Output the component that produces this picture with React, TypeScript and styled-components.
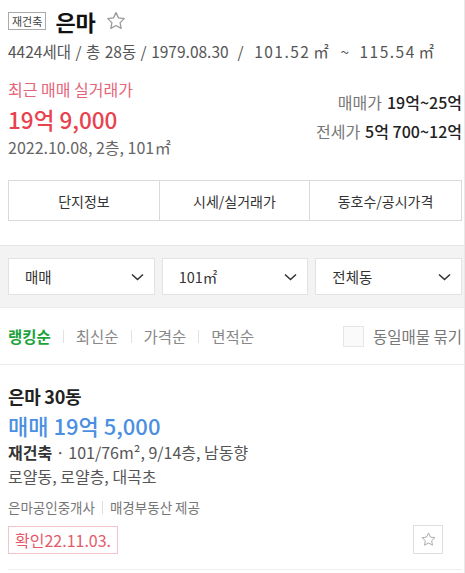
import React from "react";
import styled, {createGlobalStyle} from "styled-components";

const GlobalStyle = createGlobalStyle`
    body {
        margin: 0;
        background: #fff;
        font-family: "Noto Sans CJK KR", "Noto Sans", sans-serif;
        color: #222;
    }
`;

const Page = styled.div`
    width: 464px;
    height: 573px;
    border-right: 1px solid #e8e8e8;
    overflow: hidden;
`;

const Section = styled.div`
    padding: 0 2px 0 8px;
`;

const TitleRow = styled.div`
    display: flex;
    align-items: center;
    gap: 9px;
    padding-top: 6px;
    height: 30px;
`;

const Badge = styled.span`
    border: 1px solid #aaa;
    font-size: 11px;
    line-height: 16px;
    padding: 0 3px;
    color: #444;
`;

const Title = styled.h1`
    margin: 0;
    font-size: 22px;
    font-weight: 700;
    line-height: 28px;
    color: #111;
`;

const Meta = styled.div`
    font-size: 15.5px;
    color: #555;
    margin-top: 4px;
    line-height: 22px;
    word-spacing: 1px;
    white-space: nowrap;
`;

const Wide = styled.span`
    letter-spacing: 1.5px;
    word-spacing: 4px;
`;

const Unit = styled.span<{$w?: number}>`
    display: inline-block;
    width: ${(p) => p.$w ?? 17}px;
    text-align: center;
    letter-spacing: 0;
`;

const PriceBlock = styled.div`
    display: flex;
    justify-content: space-between;
    margin-top: 17px;
`;

const Left = styled.div`
    display: flex;
    flex-direction: column;
`;

const Label = styled.div`
    font-size: 16px;
    color: #e5657a;
    line-height: 20px;
`;

const BigPrice = styled.div`
    font-size: 22.5px;
    font-weight: 500;
    color: #e8424f;
    line-height: 30px;
    margin-top: 5px;
`;

const Sub = styled.div`
    font-size: 16px;
    color: #666;
    line-height: 22px;
    margin-top: 2px;
`;

const Right = styled.div`
    display: flex;
    flex-direction: column;
    align-items: flex-end;
    gap: 7px;
    padding-top: 12px;
`;

const RangeLine = styled.div`
    font-size: 16px;
    line-height: 22px;
    color: #777;
    b {
        color: #222;
        font-weight: 500;
        margin-left: 5px;
    }
`;

const Tabs = styled.div`
    display: grid;
    grid-template-columns: 150px 150px 1fr;
    border: 1px solid #d9d9d9;
    margin-top: 22px;
    height: 39px;
`;

const Tab = styled.div<{$first?: boolean}>`
    display: flex;
    align-items: center;
    justify-content: center;
    font-size: 14px;
    color: #333;
    border-left: ${(p) => (p.$first ? "none" : "1px solid #d9d9d9")};
`;

const FilterBand = styled.div`
    margin-top: 24px;
    border-top: 1px solid #e4e4e4;
    background: #f3f3f3;
    padding: 12px 2px 12px 8px;
    display: grid;
    grid-template-columns: 1fr 1fr 1fr;
    gap: 7px;
    border-bottom: 1px solid #ececec;
`;

const Select = styled.div`
    background: #fff;
    border: 1px solid #e2e2e2;
    height: 35px;
    display: flex;
    align-items: center;
    justify-content: space-between;
    padding: 0 10px 0 16px;
    font-size: 14.5px;
    color: #333;
`;

const SortRow = styled.div`
    display: flex;
    align-items: center;
    justify-content: space-between;
    padding: 0 2px 0 8px;
    height: 56px;
    border-bottom: 1px solid #ececec;
`;

const Sorts = styled.div`
    display: flex;
    align-items: center;
`;

const SortItem = styled.span<{$active?: boolean}>`
    font-size: 15.5px;
    color: ${(p) => (p.$active ? "#1ea23a" : "#888")};
    font-weight: ${(p) => (p.$active ? 700 : 400)};
`;

const Divider = styled.span`
    width: 1px;
    height: 13px;
    background: #e2e2e2;
    margin: 0 12px;
`;

const Group = styled.label`
    display: flex;
    align-items: center;
    gap: 9px;
    font-size: 15.5px;
    color: #777;
`;

const Box = styled.span`
    width: 19px;
    height: 19px;
    border: 1px solid #e6e6e6;
    background: #fafafa;
`;

const Card = styled.div`
    padding: 19px 2px 0 8px;
`;

const CardTitle = styled.div`
    font-size: 18px;
    font-weight: 700;
    color: #222;
    line-height: 24px;
    letter-spacing: -0.3px;
`;

const CardPrice = styled.div`
    font-size: 22px;
    color: #4a8fe2;
    font-weight: 500;
    line-height: 30px;
    margin-top: 2px;
`;

const Spec = styled.div`
    font-size: 16px;
    color: #555;
    line-height: 24px;
    b {
        color: #333;
        font-weight: 700;
    }
`;

const Agent = styled.div`
    font-size: 13.5px;
    color: #777;
    margin-top: 10px;
    line-height: 18px;
    display: flex;
    align-items: center;
    i {
        width: 1px;
        height: 13px;
        background: #ddd;
        margin: 0 7px;
    }
`;

const Bottom = styled.div`
    display: flex;
    justify-content: space-between;
    align-items: center;
    margin-top: 9px;
    padding-right: 19px;
    padding-bottom: 15px;
    border-bottom: 1px solid #eee;
`;

const Confirm = styled.span`
    border: 1px solid #f3c4ca;
    color: #e55a6b;
    font-size: 16px;
    line-height: 26px;
    padding: 0 6px;
`;

const StarButton = styled.span`
    width: 28px;
    height: 27px;
    border: 1px solid #ddd;
    display: flex;
    align-items: center;
    justify-content: center;
`;

const Star = ({size, color}: {size: number; color: string}) => (
    <svg width={size} height={size} viewBox="0 0 24 24" fill="none" stroke={color} strokeWidth="1.4" strokeLinejoin="round">
        <path d="M12 2.8l2.75 5.8 6.3.8-4.6 4.35 1.15 6.25L12 16.95 6.4 20l1.15-6.25L2.95 9.4l6.3-.8z" />
    </svg>
);

const Chevron = () => (
    <svg width="13" height="8" viewBox="0 0 13 8" fill="none" stroke="#333" strokeWidth="1.6">
        <path d="M1 1.5l5.5 5 5.5-5" />
    </svg>
);

const App = () => (
    <Page>
        <GlobalStyle />
        <Section>
            <TitleRow>
                <Badge>재건축</Badge>
                <Title>은마</Title>
                <Star size={22} color="#999" />
            </TitleRow>
            <Meta>
                4424세대 / 총 28동 / 1979.08.30<Wide> / 101.52<Unit $w={21}>㎡</Unit> ~ 115.54<Unit $w={21}>㎡</Unit></Wide>
            </Meta>
            <PriceBlock>
                <Left>
                    <Label>최근 매매 실거래가</Label>
                    <BigPrice>19억 9,000</BigPrice>
                    <Sub>2022.10.08, 2층, 101<Unit>㎡</Unit></Sub>
                </Left>
                <Right>
                    <RangeLine>매매가<b>19억~25억</b></RangeLine>
                    <RangeLine>전세가<b>5억 700~12억</b></RangeLine>
                </Right>
            </PriceBlock>
            <Tabs>
                <Tab $first>단지정보</Tab>
                <Tab>시세/실거래가</Tab>
                <Tab>동호수/공시가격</Tab>
            </Tabs>
        </Section>
        <FilterBand>
            <Select>매매<Chevron /></Select>
            <Select>101㎡<Chevron /></Select>
            <Select>전체동<Chevron /></Select>
        </FilterBand>
        <SortRow>
            <Sorts>
                <SortItem $active>랭킹순</SortItem>
                <Divider />
                <SortItem>최신순</SortItem>
                <Divider />
                <SortItem>가격순</SortItem>
                <Divider />
                <SortItem>면적순</SortItem>
            </Sorts>
            <Group>
                <Box />
                동일매물 묶기
            </Group>
        </SortRow>
        <Card>
            <CardTitle>은마 30동</CardTitle>
            <CardPrice>매매 19억 5,000</CardPrice>
            <Spec><b>재건축</b> · 101/76m², 9/14층, 남동향</Spec>
            <Spec>로얄동, 로얄층, 대곡초</Spec>
            <Agent>은마공인중개사<i />매경부동산 제공</Agent>
            <Bottom>
                <Confirm>확인22.11.03.</Confirm>
                <StarButton><Star size={17} color="#aaa" /></StarButton>
            </Bottom>
        </Card>
    </Page>
);

export default App;
